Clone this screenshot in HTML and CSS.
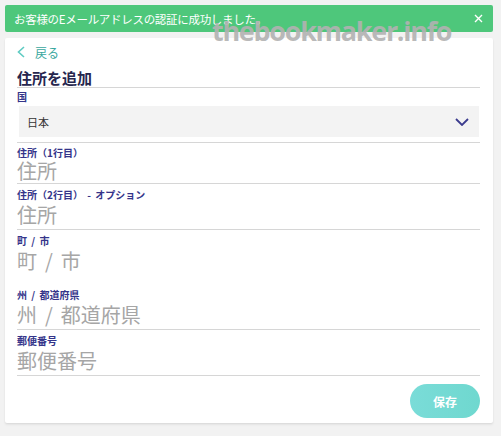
FILE: index.html
```html
<!DOCTYPE html>
<html lang="ja">
<head>
<meta charset="utf-8">
<link rel="stylesheet" href="styles.css">
</head>
<body>
<div class="banner">
  <span class="banner-text">お客様のEメールアドレスの認証に成功しました。</span>
  <svg class="close" width="9" height="9" viewBox="0 0 9 9"><path d="M1 1L8 8M8 1L1 8" stroke="#fff" stroke-width="1.4" fill="none"/></svg>
</div>
<div class="card">
  <div class="back">
    <svg class="chev" width="8" height="12" viewBox="0 0 8 12"><path d="M7 1L1.5 6L7 11" stroke="#5ecbc2" stroke-width="1.6" fill="none"/></svg>
    <span class="back-text">戻る</span>
  </div>
  <div class="title">住所を追加</div>
  <div class="country">
    <div class="label">国</div>
    <div class="select">
      <span class="select-text">日本</span>
      <svg width="14" height="8" viewBox="0 0 14 8"><path d="M1 1L7 7L13 1" stroke="#3b3b8e" stroke-width="1.8" fill="none"/></svg>
    </div>
  </div>
  <div class="field first">
    <div class="label">住所（1行目）</div>
    <div class="input">住所</div>
  </div>
  <div class="field">
    <div class="label">住所（2行目） - オプション</div>
    <div class="input">住所</div>
  </div>
  <div class="field noline">
    <div class="label">町 / 市</div>
    <div class="input">町 / 市</div>
  </div>
  <div class="field">
    <div class="label">州 / 都道府県</div>
    <div class="input">州 / 都道府県</div>
  </div>
  <div class="field">
    <div class="label">郵便番号</div>
    <div class="input">郵便番号</div>
  </div>
  <div class="actions">
    <button class="save">保存</button>
  </div>
</div>
<div class="watermark">thebookmaker.info</div>
</body>
</html>
```
FILE: styles.css
```css
html, body {
  margin: 0;
  padding: 0;
}
body {
  background: #f2f2f2;
  padding: 5px 8px 0 5px;
  font-family: "Noto Sans CJK JP", "Noto Sans", sans-serif;
  position: relative;
  height: 436px;
  box-sizing: border-box;
  overflow: hidden;
}
.banner {
  height: 27px;
  background: #4ec77b;
  display: flex;
  align-items: center;
  justify-content: space-between;
  padding: 0 10px 0 9px;
  color: #fff;
  border-radius: 2px;
}
.banner-text {
  font-size: 11.5px;
  letter-spacing: -0.3px;
}
.close {
  display: block;
}
.card {
  margin-top: 6px;
  background: #fff;
  height: 385px;
  box-sizing: border-box;
  padding: 0 13px 0 12px;
  box-shadow: 0 1px 2px rgba(0,0,0,0.06), 0 2px 3px rgba(0,0,0,0.05);
  border-radius: 2px;
}
.back {
  height: 28px;
  display: flex;
  align-items: center;
  gap: 10px;
}
.chev {
  display: block;
}
.back-text {
  font-size: 12px;
  color: #3aa79e;
}
.title {
  padding-top: 2px;
  line-height: 19px;
  font-size: 15px;
  font-weight: bold;
  color: #26264e;
  border-bottom: 1px solid #d6d6d6;
}
.label {
  font-size: 10px;
  line-height: 14px;
  font-weight: bold;
  color: #34348a;
  white-space: pre;
  word-spacing: 2px;
}
.country {
  padding: 2px 0 5px;
  border-bottom: 1px solid #d6d6d6;
}
.select {
  margin: 2px 1px 0 2px;
  height: 31px;
  background: #f3f3f3;
  display: flex;
  align-items: center;
  justify-content: space-between;
  padding: 0 10px 0 8px;
}
.select-text {
  font-size: 11px;
  color: #333;
}
.select svg {
  display: block;
}
.field {
  padding-top: 4px;
  border-bottom: 1px solid #d6d6d6;
}
.field.first {
  padding-top: 3px;
}
.field.first .input {
  height: 23px;
  line-height: 21px;
}
.field.noline {
  border-bottom-color: transparent;
  margin-bottom: 8px;
}
.input {
  height: 27px;
  line-height: 25px;
  font-size: 20px;
  color: #a6a6a6;
  white-space: pre;
  word-spacing: 3.5px;
}
.actions {
  display: flex;
  justify-content: flex-end;
  padding-top: 8px;
}
.save {
  width: 70px;
  height: 34px;
  border: none;
  border-radius: 17px;
  background: linear-gradient(90deg, #7adcd8, #6fd8cf);
  color: #fff;
  font-family: "Noto Sans CJK JP", sans-serif;
  font-weight: bold;
  font-size: 12px;
  padding: 0;
}
.watermark {
  position: absolute;
  left: 212px;
  top: 12px;
  font-family: "Open Sans", sans-serif;
  font-weight: bold;
  font-size: 27px;
  letter-spacing: -1.3px;
  color: rgba(178,178,178,0.92);
  white-space: nowrap;
  pointer-events: none;
}
```
